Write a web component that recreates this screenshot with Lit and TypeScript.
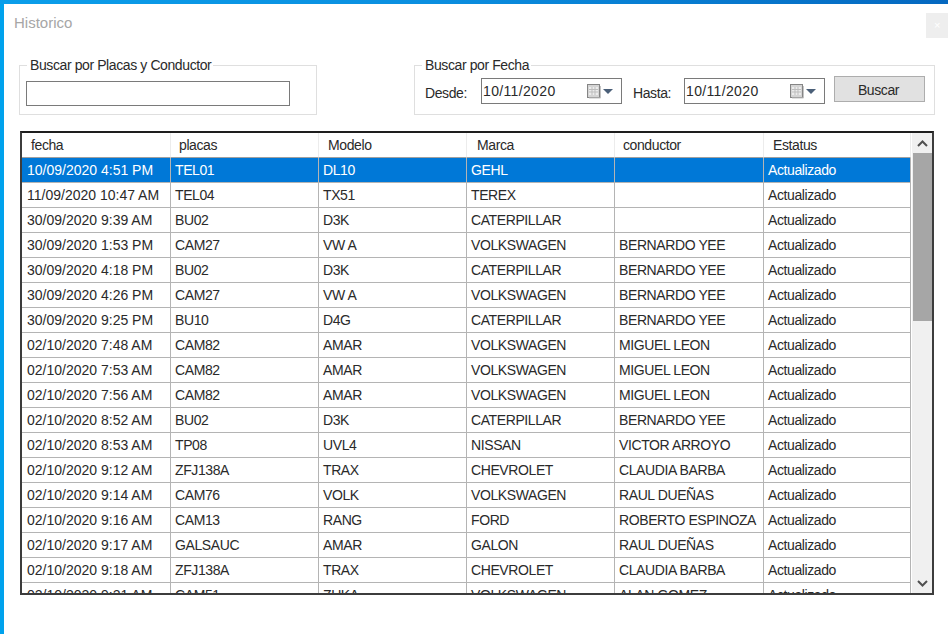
import { LitElement, html, css, svg } from "lit";
import { customElement } from "lit/decorators.js";

const rows: string[][] = [
  ["10/09/2020 4:51 PM", "TEL01", "DL10", "GEHL", ""],
  ["11/09/2020 10:47 AM", "TEL04", "TX51", "TEREX", ""],
  ["30/09/2020 9:39 AM", "BU02", "D3K", "CATERPILLAR", ""],
  ["30/09/2020 1:53 PM", "CAM27", "VW A", "VOLKSWAGEN", "BERNARDO YEE"],
  ["30/09/2020 4:18 PM", "BU02", "D3K", "CATERPILLAR", "BERNARDO YEE"],
  ["30/09/2020 4:26 PM", "CAM27", "VW A", "VOLKSWAGEN", "BERNARDO YEE"],
  ["30/09/2020 9:25 PM", "BU10", "D4G", "CATERPILLAR", "BERNARDO YEE"],
  ["02/10/2020 7:48 AM", "CAM82", "AMAR", "VOLKSWAGEN", "MIGUEL LEON"],
  ["02/10/2020 7:53 AM", "CAM82", "AMAR", "VOLKSWAGEN", "MIGUEL LEON"],
  ["02/10/2020 7:56 AM", "CAM82", "AMAR", "VOLKSWAGEN", "MIGUEL LEON"],
  ["02/10/2020 8:52 AM", "BU02", "D3K", "CATERPILLAR", "BERNARDO YEE"],
  ["02/10/2020 8:53 AM", "TP08", "UVL4", "NISSAN", "VICTOR ARROYO"],
  ["02/10/2020 9:12 AM", "ZFJ138A", "TRAX", "CHEVROLET", "CLAUDIA BARBA"],
  ["02/10/2020 9:14 AM", "CAM76", "VOLK", "VOLKSWAGEN", "RAUL DUEÑAS"],
  ["02/10/2020 9:16 AM", "CAM13", "RANG", "FORD", "ROBERTO ESPINOZA"],
  ["02/10/2020 9:17 AM", "GALSAUC", "AMAR", "GALON", "RAUL DUEÑAS"],
  ["02/10/2020 9:18 AM", "ZFJ138A", "TRAX", "CHEVROLET", "CLAUDIA BARBA"],
  ["02/10/2020 9:21 AM", "CAM51", "ZUKA", "VOLKSWAGEN", "ALAN GOMEZ"],
];
const headers = ["fecha", "placas", "Modelo", "Marca", "conductor", "Estatus"];

const calIcon = svg`<svg class="cal" width="30" height="16" viewBox="0 0 30 16">
  <rect x="1.5" y="1.5" width="12" height="13" fill="#d4d4d4" stroke="#858585"/>
  <rect x="3" y="4" width="9" height="8" fill="#ececec"/>
  <path d="M3 6.5h9M3 9h9M6 4v8M9 4v8" stroke="#bdbdbd" stroke-width="1" fill="none"/>
  <path d="M14.5 3v12H3" stroke="#c4c4c4" fill="none"/>
  <path d="M17 6h10l-5 5z" fill="#4a5f78"/>
</svg>`;

@customElement("app-root")
export class AppRoot extends LitElement {
  static styles = css`
    :host {
      display: block;
      width: 948px;
      height: 634px;
      font-family: "Liberation Sans", Arial, sans-serif;
      font-size: 14px;
      letter-spacing: -0.4px;
      color: #2a2a2a;
      background: #fff;
      overflow: hidden;
    }
    .window {
      box-sizing: border-box;
      width: 948px;
      height: 634px;
      display: flex;
      flex-direction: column;
      border-left: 4px solid #00a2ed;
      position: relative;
    }
    .topline {
      height: 4px;
      flex: none;
      margin-left: -4px;
      background: linear-gradient(90deg, #0a9eea 0%, #0a8fe0 45%, #0568c0 100%);
    }
    .titlebar {
      height: 53px;
      flex: none;
      display: flex;
      justify-content: space-between;
      align-items: flex-start;
    }
    .title {
      margin: 10px 0 0 10px;
      font-size: 15px;
      letter-spacing: 0;
      line-height: 18px;
      color: #a6a6a6;
    }
    .close {
      margin-top: 9px;
      width: 22px;
      height: 25px;
      background: #eeeeee;
      color: #fff;
      font-size: 11px;
      line-height: 25px;
      text-align: center;
    }
    .filters {
      display: flex;
      flex: none;
      height: 74px;
      margin-left: 15px;
    }
    fieldset {
      box-sizing: border-box;
      margin: 0;
      padding: 0;
      border: 1px solid #dfdfdf;
      height: 58px;
      min-width: 0;
    }
    legend {
      padding: 0 2px 0 3px;
      margin-left: 7px;
      line-height: 16px;
      white-space: nowrap;
    }
    .g1 { width: 298px; margin-right: 97px; }
    .g2 { width: 521px; }
    .text-input {
      box-sizing: border-box;
      width: 264px;
      height: 25px;
      margin: 8px 0 0 6px;
      border: 1px solid #7a7a7a;
      background: #fff;
      display: block;
    }
    .date-row {
      display: flex;
      align-items: flex-start;
      margin-top: 4px;
    }
    .lbl { line-height: 16px; margin-top: 8px; }
    .lbl.desde { margin-left: 10px; width: 56px; }
    .lbl.hasta { margin-left: 11px; width: 51px; }
    .picker {
      box-sizing: border-box;
      width: 141px;
      height: 26px;
      margin-top: 1px;
      border: 1px solid #7a7a7a;
      background: #fff;
      display: flex;
      align-items: center;
      justify-content: space-between;
      padding-left: 1px;
      letter-spacing: 0.35px;
    }
    .cal { display: block; margin-right: 5px; }
    button {
      box-sizing: border-box;
      width: 91px;
      height: 26px;
      margin: -1px 0 0 9px;
      padding: 1px 2px 0 0;
      border: 1px solid #adadad;
      background: #e1e1e1;
      color: #2a2a2a;
      font: inherit;
      letter-spacing: inherit;
    }
    .grid {
      box-sizing: border-box;
      flex: none;
      width: 914px;
      height: 464px;
      margin-left: 16px;
      border: 2px solid #3c3c3c;
      border-top-color: #1e1e1e;
      display: flex;
      overflow: hidden;
      background: #fff;
    }
    .table { width: 889px; flex: none; overflow: hidden; }
    .row {
      display: grid;
      grid-template-columns: 149px 148px 148px 148px 149px 147px;
      height: 25px;
    }
    .cell {
      box-sizing: border-box;
      height: 25px;
      line-height: 25px;
      padding-left: 4px;
      border-right: 1px solid #b4b4b4;
      border-bottom: 1px solid #b4b4b4;
      white-space: nowrap;
      overflow: hidden;
    }
    .cell:first-child {
      padding-left: 5px;
      letter-spacing: 0;
    }
    .head .cell {
      padding-left: 9px;
      line-height: 25px;
      letter-spacing: -0.4px;
      border-right-color: #ececec;
      border-bottom-color: #a0a0a0;
    }
    .head .cell:nth-child(2),
    .head .cell:nth-child(5) { padding-left: 8px; }
    .head .cell:nth-child(4) { padding-left: 10px; }
    .sel .cell { background: #0078d7; color: #fff; }
    .scroll {
      flex: none;
      width: 21px;
      margin-left: 1px;
      background: #f0f0f0;
      display: flex;
      flex-direction: column;
    }
    .arrow {
      height: 20px;
      flex: none;
      display: flex;
      align-items: center;
      justify-content: center;
    }
    .thumb { height: 168px; flex: none; background: #a6a6a6; margin: 0 0 0 1px; }
    .track { flex: 1; }
  `;

  picker(v: string) {
    return html`<div class="picker"><span>${v}</span>${calIcon}</div>`;
  }

  render() {
    return html`
      <div class="window">
        <div class="topline"></div>
        <div class="titlebar">
          <div class="title">Historico</div>
          <div class="close">×</div>
        </div>
        <div class="filters">
          <fieldset class="g1">
            <legend>Buscar por Placas y Conductor</legend>
            <div class="text-input"></div>
          </fieldset>
          <fieldset class="g2">
            <legend>Buscar por Fecha</legend>
            <div class="date-row">
              <span class="lbl desde">Desde:</span>
              ${this.picker("10/11/2020")}
              <span class="lbl hasta">Hasta:</span>
              ${this.picker("10/11/2020")}
              <button>Buscar</button>
            </div>
          </fieldset>
        </div>
        <div class="grid">
          <div class="table">
            <div class="row head">
              ${headers.map((h) => html`<div class="cell">${h}</div>`)}
            </div>
            ${rows.map(
              (r, i) => html`<div class="row ${i === 0 ? "sel" : ""}">
                ${r.map((c) => html`<div class="cell">${c}</div>`)}
                <div class="cell">Actualizado</div>
              </div>`
            )}
          </div>
          <div class="scroll">
            <div class="arrow">
              <svg width="11" height="7" viewBox="0 0 11 7"><path d="M1 6l4.5-4.5L10 6" fill="none" stroke="#505050" stroke-width="2"/></svg>
            </div>
            <div class="thumb"></div>
            <div class="track"></div>
            <div class="arrow">
              <svg width="11" height="7" viewBox="0 0 11 7"><path d="M1 1l4.5 4.5L10 1" fill="none" stroke="#505050" stroke-width="2"/></svg>
            </div>
          </div>
        </div>
      </div>
    `;
  }
}
